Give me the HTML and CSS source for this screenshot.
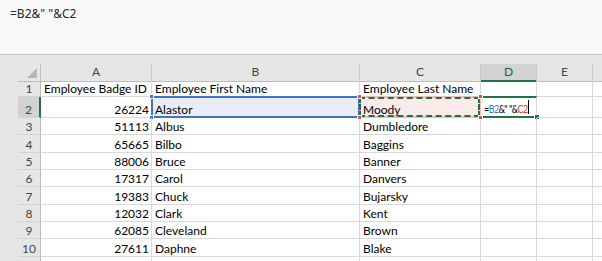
FILE: index.html
```html
<!DOCTYPE html>
<html lang="en">
<head>
    <meta charset="UTF-8">
    <title>Concatenate names</title>
    <link rel="stylesheet" href="styles.css">
</head>
<body>

<!--formula bar-->
<section class="formula-bar">
    <div class="formula-text">=B2&amp;" "&amp;C2</div>
</section>

<!--sheet-->
<section class="sheet">
    <div class="row head">
        <div class="rh corner"></div>
        <div class="ch">A</div>
        <div class="ch">B</div>
        <div class="ch">C</div>
        <div class="ch active">D</div>
        <div class="ch">E</div>
        <div class="ch"></div>
    </div>
    <div class="row r1">
        <div class="rh">1</div>
        <div class="cell">Employee Badge ID</div>
        <div class="cell">Employee First Name</div>
        <div class="cell">Employee Last Name</div>
        <div class="cell"></div>
        <div class="cell"></div>
        <div class="cell"></div>
    </div>
    <div class="row r2">
        <div class="rh active">2</div>
        <div class="cell num">26224</div>
        <div class="cell ref-blue">Alastor<i class="h tl"></i><i class="h bl"></i></div>
        <div class="cell ref-red">Moody<i class="h tl"></i><i class="h bl"></i><i class="h tr"></i><i class="h br"></i></div>
        <div class="cell editing">
            <span class="edit-text">=<span class="blue">B2</span>&amp;" "&amp;<span class="red">C2</span></span><span class="caret"></span><i class="fill"></i>
        </div>
        <div class="cell"></div>
        <div class="cell"></div>
    </div>
    <div class="row">
        <div class="rh">3</div>
        <div class="cell num">51113</div>
        <div class="cell">Albus</div>
        <div class="cell">Dumbledore</div>
        <div class="cell"></div><div class="cell"></div><div class="cell"></div>
    </div>
    <div class="row">
        <div class="rh">4</div>
        <div class="cell num">65665</div>
        <div class="cell">Bilbo</div>
        <div class="cell">Baggins</div>
        <div class="cell"></div><div class="cell"></div><div class="cell"></div>
    </div>
    <div class="row">
        <div class="rh">5</div>
        <div class="cell num">88006</div>
        <div class="cell">Bruce</div>
        <div class="cell">Banner</div>
        <div class="cell"></div><div class="cell"></div><div class="cell"></div>
    </div>
    <div class="row">
        <div class="rh">6</div>
        <div class="cell num">17317</div>
        <div class="cell">Carol</div>
        <div class="cell">Danvers</div>
        <div class="cell"></div><div class="cell"></div><div class="cell"></div>
    </div>
    <div class="row">
        <div class="rh">7</div>
        <div class="cell num">19383</div>
        <div class="cell">Chuck</div>
        <div class="cell">Bujarsky</div>
        <div class="cell"></div><div class="cell"></div><div class="cell"></div>
    </div>
    <div class="row">
        <div class="rh">8</div>
        <div class="cell num">12032</div>
        <div class="cell">Clark</div>
        <div class="cell">Kent</div>
        <div class="cell"></div><div class="cell"></div><div class="cell"></div>
    </div>
    <div class="row">
        <div class="rh">9</div>
        <div class="cell num">62085</div>
        <div class="cell">Cleveland</div>
        <div class="cell">Brown</div>
        <div class="cell"></div><div class="cell"></div><div class="cell"></div>
    </div>
    <div class="row">
        <div class="rh">10</div>
        <div class="cell num">27611</div>
        <div class="cell">Daphne</div>
        <div class="cell">Blake</div>
        <div class="cell"></div><div class="cell"></div><div class="cell"></div>
    </div>
    <div class="row">
        <div class="rh"></div>
        <div class="cell"></div><div class="cell"></div><div class="cell"></div>
        <div class="cell"></div><div class="cell"></div><div class="cell"></div>
    </div>
</section>

</body>
</html>
```

FILE: styles.css
```css
*{ box-sizing: border-box;}
html,body{ margin: 0; padding: 0;}
body{ width: 602px; height: 261px; overflow: hidden; background: #fff; font-family: Lato, "Liberation Sans", sans-serif;}

/* formula bar */
.formula-bar{ height: 55px; background: #f9f9f9; border-bottom: 1px solid #c6c6c6; padding: 5px 0 0 10px;}
.formula-text{ font-family: "Noto Sans", sans-serif; font-size: 12px; color: #262626;}

/* sheet */
.sheet{ background: #e6e6e6; padding: 9px 0 0 18px; overflow: hidden;}
.row{ display: grid; grid-template-columns: 23px 111px 208px 121px 56px 56px 64px; height: 17.33px; background: #fff;}
.row.head{ height: 17px; background: #e6e6e6;}
.row.r1{ height: 16px;}
.row.r2{ height: 21px;}

.rh{ background: #e6e6e6; border-right: 1px solid #bdbdbd; border-bottom: 1px solid #d4d4d4; color: #444; font-size: 12px; display: flex; align-items: flex-end; justify-content: center; line-height: 15px;}
.rh.active{ background: #d2d2d2; border-right: 2px solid #217346; color: #1d5e36;}
.corner{ position: relative; border-bottom: 1px solid #bdbdbd;}
.corner::after{ content: ""; position: absolute; right: 3px; bottom: 3px; width: 10px; height: 10px; background: #b5b5b5; clip-path: polygon(100% 0, 100% 100%, 0 100%);}

.ch{ border-right: 1px solid #c6c6c6; border-bottom: 1px solid #bdbdbd; color: #444; font-size: 12px; text-align: center; line-height: 16px;}
.ch.active{ background: #d2d2d2; border-bottom: 2px solid #217346; color: #1d5e36;}

.cell{ position: relative; border-right: 1px solid #d9d9d9; border-bottom: 1px solid #d9d9d9; font-size: 12px; color: #000; padding: 0 3px; display: flex; align-items: flex-end; line-height: 15px; white-space: nowrap;}
.cell.num{ justify-content: flex-end; padding-right: 2px;}

/* reference highlight on B2 */
.ref-blue{ background: #e9eef6;}
.ref-blue::before{ content: ""; position: absolute; left: -1px; top: -1px; right: -1px; bottom: -1px; border: 2px solid #4472c4;}
.ref-blue .h{ background: #4472c4;}

/* reference highlight on C2, with copy marquee */
.ref-red{ background: #fbeaea;}
.ref-red::before{ content: ""; position: absolute; left: -1px; top: -1px; right: -1px; bottom: -1px; border: 2px solid #eeb8b8;}
.ref-red::after{ content: ""; position: absolute; left: -1px; top: 0; right: 0; bottom: 0; border: 2px dashed #217346;}
.ref-red .h{ background: #d9534f; z-index: 2;}

.h{ position: absolute; width: 5px; height: 5px; border: 1px solid #fff;}
.h.tl{ left: -3px; top: -3px;}
.h.bl{ left: -3px; bottom: -3px;}
.h.tr{ right: -3px; top: -3px;}
.h.br{ right: -3px; bottom: -3px;}

/* cell being edited */
.editing{ border-top: 2px solid #217346; border-bottom: 2px solid #217346; margin-top: -1px; padding-left: 3px;}
.edit-text{ display: inline-block; width: 44px; font-size: 12px; letter-spacing: -0.6px; transform: scaleX(0.74); transform-origin: left bottom;}
.editing .blue{ color: #3f6fc6;}
.editing .red{ color: #d9403c;}
.editing .caret{ display: inline-block; width: 1px; height: 14px; background: #000; align-self: center;}
.editing .fill{ position: absolute; right: -4px; bottom: -4px; width: 6px; height: 6px; background: #217346; border: 1px solid #fff;}
```
